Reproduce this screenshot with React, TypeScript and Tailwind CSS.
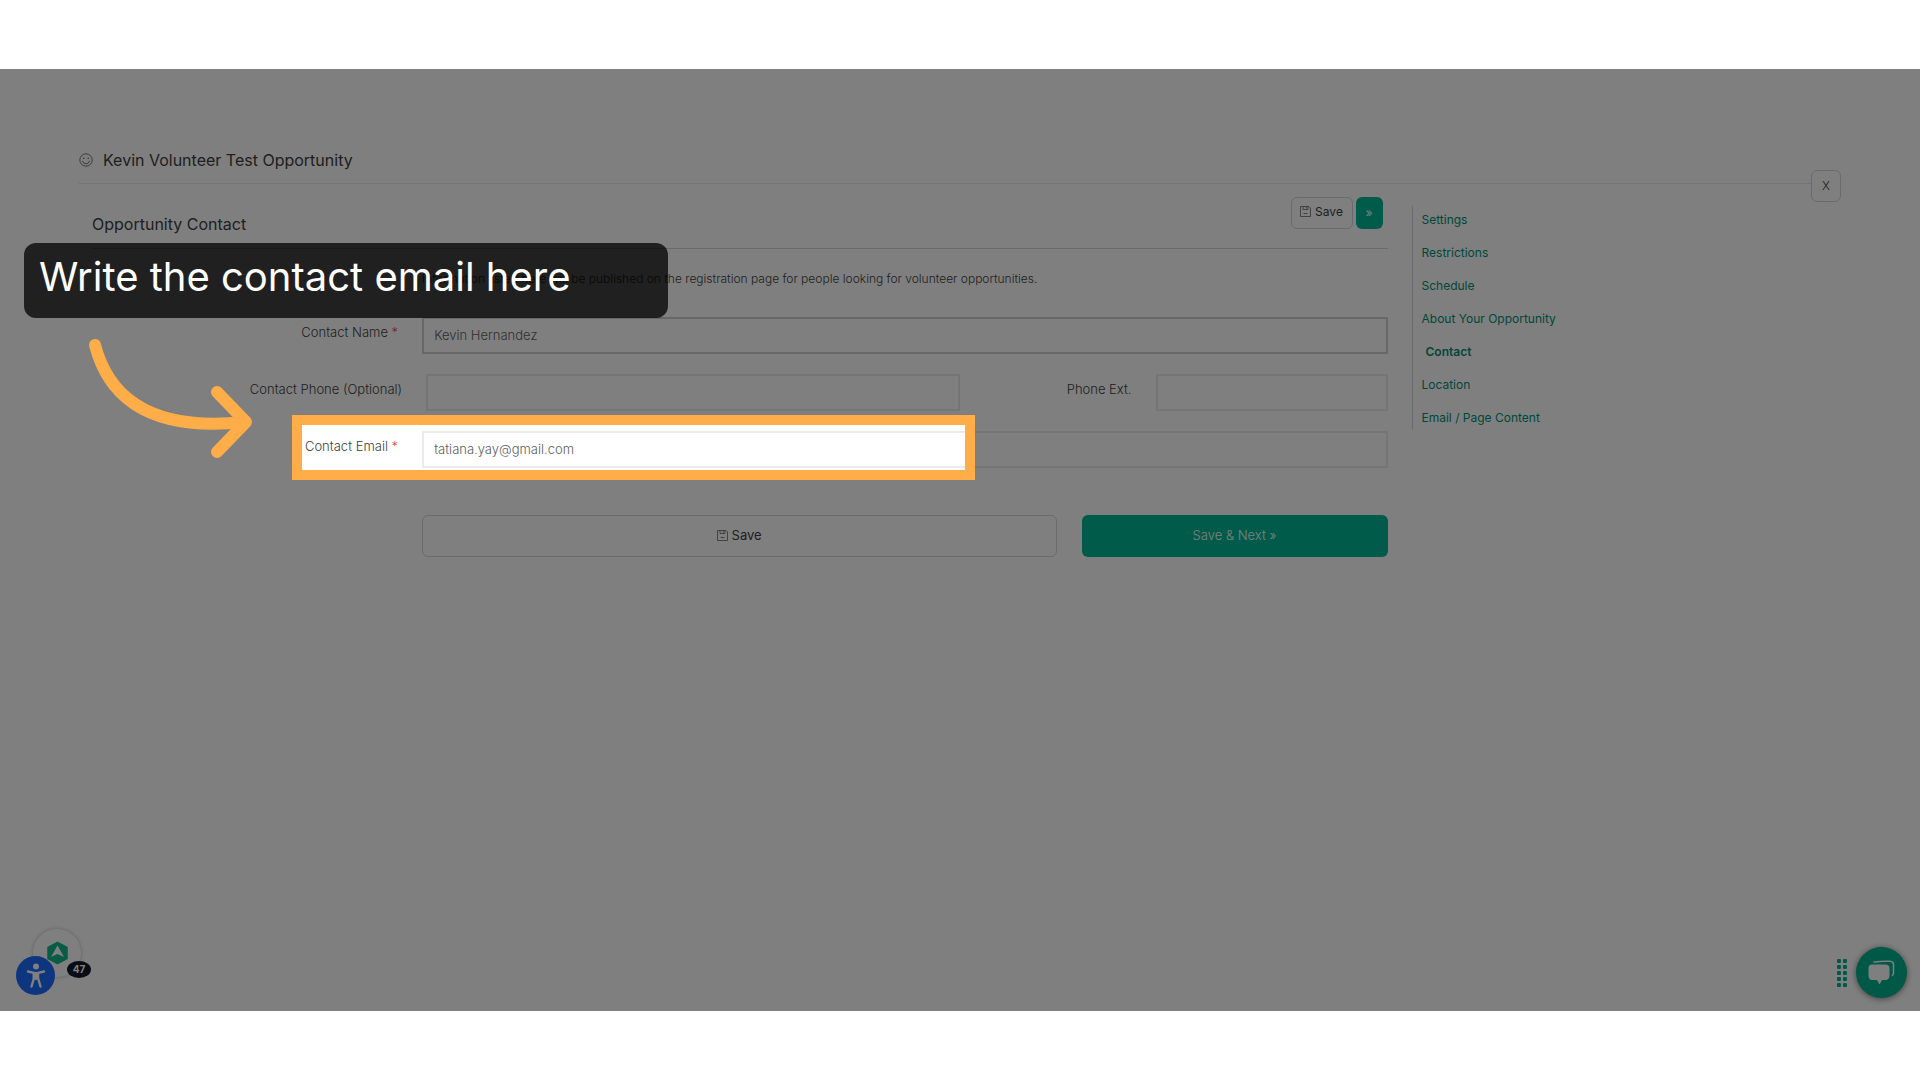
import type { ReactNode } from "react";

const NAV_ITEMS = [
  "Settings",
  "Restrictions",
  "Schedule",
  "About Your Opportunity",
  "Contact",
  "Location",
  "Email / Page Content",
];

const INPUT = "h-[37px] min-w-0 border-2 bg-white px-[10px] pb-px text-[13px] font-light text-[#606060] outline-none";

function FieldLabel({ htmlFor, required, children }: { htmlFor: string; required?: boolean; children: ReactNode }) {
  return (
    <label htmlFor={htmlFor} className="w-1/4 shrink-0 pt-[6px] pr-2 text-right text-[13px] leading-[18px] font-light">
      {children}
      {required && <span className="text-[#e5484d]"> *</span>}
    </label>
  );
}

function SmileIcon() {
  return (
    <svg className="size-[14px]" viewBox="0 0 14 14" fill="none" stroke="#555" strokeWidth="0.8">
      <circle cx="7" cy="7" r="6.2" />
      <path d="M3.6 8.2a3.5 3.5 0 0 0 6.8 0" strokeLinecap="round" />
      <circle cx="4.8" cy="5.2" r="0.7" fill="#555" stroke="none" />
      <circle cx="9.2" cy="5.2" r="0.7" fill="#555" stroke="none" />
    </svg>
  );
}

function DiskIcon() {
  return (
    <svg className="mb-[2px] size-[11px]" viewBox="0 0 11 11" fill="none" stroke="#666" strokeWidth="0.8">
      <path d="M0.5 0.5h8.5l1.5 1.5v8.5h-10z" />
      <path d="M3 0.5v3h5v-3M6.3 1v1.500M3.500 7.500h4" />
    </svg>
  );
}

function ArrowDoodle() {
  return (
    <svg className="h-[140px] w-[180px]" viewBox="0 0 180 140" fill="none"
      stroke="#ffad48" strokeWidth="12" strokeLinecap="round" strokeLinejoin="round">
      <path d="M15 16C29 70 72 103 165 93" />
      <path d="M137 63L166 93L137 123" />
    </svg>
  );
}

function AccessibilityWidget() {
  return (
    <div className="absolute bottom-4 left-4 h-[66px] w-[80px]">
      <button type="button" aria-label="Resources"
        className="absolute top-0 left-[17px] flex size-12 items-center justify-center rounded-full bg-white shadow-[0_0_4px_rgba(0,0,0,0.25)]">
        <svg className="h-[24px] w-[21px]" viewBox="0 0 21 23">
          <path d="M10.5 0.8L20 6v11L10.5 22.2L1 17V6z" fill="#12b886" stroke="#12b886" strokeWidth="1.5" strokeLinejoin="round" />
          <path d="M10.5 4l6.500 11.500l-6.500-3l-6.500 3z" fill="#fff" />
        </svg>
      </button>
      <button type="button" aria-label="Accessibility"
        className="absolute bottom-0 left-0 flex size-[39px] items-center justify-center rounded-full bg-[#1a6cff]">
        <svg className="size-[26px]" viewBox="0 0 26 26" fill="#fff" stroke="#fff" strokeLinecap="round" strokeLinejoin="round">
          <circle cx="13" cy="3.4" r="3" stroke="none" />
          <path d="M5 8.500L11 9.800v5.200L8.500 23.500M21 8.500L15 9.800v5.200L17.500 23.500" fill="none" strokeWidth="2.400" />
          <path d="M10.500 9.500h5v6L13 16.500l-2.500-1z" />
        </svg>
      </button>
      <span className="absolute top-8 left-[51px] flex h-[17px] w-6 items-center justify-center rounded-[50%] bg-[#101828] text-[10px] font-bold text-white">
        47
      </span>
    </div>
  );
}

function ChatWidget() {
  return (
    <div className="absolute right-[13px] bottom-[13px] flex items-center gap-[9px]">
      <div className="grid grid-cols-2 gap-[2px]">
        {Array.from({ length: 10 }, (_, i) => (
          <span key={i} className="size-1 rounded-[1px] bg-[#00b08c]" />
        ))}
      </div>
      <button type="button" aria-label="Open chat"
        className="flex size-[51px] items-center justify-center rounded-full bg-[#00b08c] shadow-[0_1px_6px_rgba(0,0,0,0.5)]">
        <svg className="h-[25px] w-[27px]" viewBox="0 0 27 25">
          <path d="M4 4.500h13.500q4 0 4 4v6.500q0 5-4 5h-3.500L11.500 24.500L9 20H4q-3.500 0-3.500-5V8.500q0-4 3.500-4z" fill="#fff" />
          <path d="M5.500 2.300Q14 0.800 22 1.300q3.500.3 3.500 3.200v8.500q0 2-1.700 2.700" fill="none" stroke="#fff" strokeWidth="1.500" />
        </svg>
      </button>
    </div>
  );
}

export default function App() {
  return (
    <div className="flex min-h-screen flex-col bg-white py-[69px] font-['Inter',sans-serif] text-[#3c3e40]">
      <main className="relative flex-1 overflow-hidden bg-white px-[79px]">
        <header className="relative flex items-center gap-[10px] border-b border-gray-200 pt-[79px] pb-[11px]">
          <SmileIcon />
          <h1 className="text-base leading-6">Kevin Volunteer Test Opportunity</h1>
          <button type="button"
            className="absolute right-0 -bottom-[19px] h-8 w-[30px] rounded-md border border-gray-300 bg-white text-xs font-light">
            X
          </button>
        </header>

        <div className="flex">
          <form className="w-3/4 pr-[13px]" onSubmit={(e) => e.preventDefault()}>
            <div className="ml-[13px] flex h-[65px] items-start border-b border-gray-300 pt-[13px]">
              <h2 className="pt-[15px] text-base leading-6">Opportunity Contact</h2>
              <button type="button"
                className="ml-auto flex h-8 w-[62px] items-center justify-center gap-1 rounded-md border border-gray-300 pb-[2px] text-xs">
                <DiskIcon />
                Save
              </button>
              <button type="button" aria-label="Save and go to next"
                className="mr-[5px] ml-[3px] h-8 w-[27px] rounded-md bg-[#00b795] text-xs text-white">
                »
              </button>
            </div>

            <p className="ml-[26.2%] pt-[21px] text-xs leading-[18px] font-light">
              Information listed here will be published on the registration page for people looking for volunteer opportunities.
            </p>

            <div className="mt-[29px] flex flex-col gap-5">
              <div className="flex gap-4">
                <FieldLabel htmlFor="contact-name" required>Contact Name</FieldLabel>
                <input id="contact-name" type="text" defaultValue="Kevin Hernandez"
                  className={`${INPUT} flex-1 border-[#ccd0d4]`} />
              </div>

              <div className="flex gap-5">
                <FieldLabel htmlFor="contact-phone"><span className="-mr-1">Contact Phone (Optional)</span></FieldLabel>
                <input id="contact-phone" type="tel" className={`${INPUT} flex-1 border-[#ebebeb]`} />
                <div className="flex w-[408px] gap-6">
                  <label htmlFor="phone-ext" className="flex-1 pt-[6px] text-right text-[13px] leading-[18px] font-light">Phone Ext.</label>
                  <input id="phone-ext" type="text" className={`${INPUT} w-[232px] border-[#ebebeb]`} />
                </div>
              </div>

              <div className="relative flex gap-4">
                <FieldLabel htmlFor="contact-email" required>Contact Email</FieldLabel>
                <input id="contact-email" type="email" defaultValue="tatiana.yay@gmail.com"
                  className={`${INPUT} flex-1 border-[#ebebeb]`} />
                {/* spotlight: its spread shadow dims everything else in main */}
                <div className="pointer-events-none absolute -top-4 -bottom-3 left-[213px] z-10 w-[683px] border-10 border-[#ffad48] shadow-[0_0_0_2000px_rgba(0,0,0,0.5)]" />
              </div>
            </div>

            <div className="mt-[47px] ml-[26.2%] flex gap-[25px]">
              <button type="button"
                className="flex h-[42px] flex-1 items-center justify-center gap-1 rounded-md border border-gray-300 text-[13px]">
                <DiskIcon />
                Save
              </button>
              <button type="submit" className="h-[42px] w-[306px] rounded-md bg-[#00b795] text-[13px] font-light text-white">
                Save &amp; Next »
              </button>
            </div>
          </form>

          <nav className="mt-[22px] ml-[11px] flex h-[224px] flex-col gap-[15px] border-l border-gray-300 pt-[5px] pl-[9px] text-xs leading-[18px] text-[#008f74]">
            {NAV_ITEMS.map((item) => (
              <a key={item} href="#" className={item === "Contact" ? "pl-1 font-semibold" : ""}>
                {item}
              </a>
            ))}
          </nav>
        </div>

        <AccessibilityWidget />
        <ChatWidget />

        <div className="absolute top-[174px] left-6 z-20 h-[75px] w-[644px] rounded-xl bg-black/75 pt-[9px] pl-[15px] text-[40px] leading-[50px] font-normal text-white">
          Write the contact email here
        </div>
        <div className="pointer-events-none absolute top-[260px] left-[80px] z-20">
          <ArrowDoodle />
        </div>
      </main>
    </div>
  );
}
